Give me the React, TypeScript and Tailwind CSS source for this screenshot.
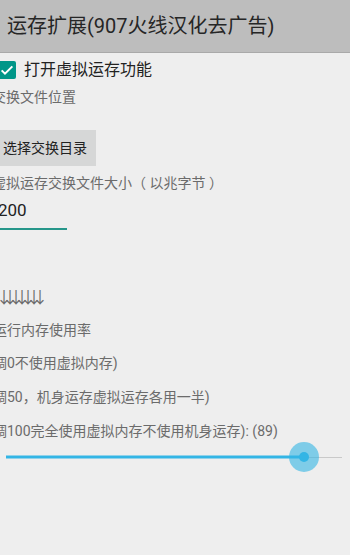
import React from 'react'

const font = { fontFamily: 'Roboto, "Noto Sans CJK SC", sans-serif' }

function Label({ children, className = '' }: { children: React.ReactNode; className?: string }) {
  return (
    <div className={`flex items-center text-[14px] text-[#6b6b6b] whitespace-nowrap ${className}`}>
      {children}
    </div>
  )
}

export default function App() {
  const value = 89
  return (
    <div className="w-[350px] h-[555px] overflow-hidden bg-[#eeeeee]" style={font}>
      <header className="h-[53px] bg-[#bdbdbd] border-b border-[#a9a9a9] flex items-center pl-[7px]">
        <span className="text-[20px] text-[#262626] whitespace-nowrap">运存扩展(907火线汉化去广告)</span>
      </header>

      <div className="flex flex-col">
        <div className="h-[32px] flex items-center mt-[1px]">
          <div className="ml-[-2px] w-[18px] h-[18px] rounded-[2px] bg-[#009688] flex items-center justify-center">
            <svg viewBox="0 0 24 24" className="w-[16px] h-[16px]" fill="none" stroke="#fff" strokeWidth="3">
              <path d="M4 12.5l5 5L20 6.5" />
            </svg>
          </div>
          <span className="ml-[8px] text-[16px] text-[#222] whitespace-nowrap">打开虚拟运存功能</span>
        </div>

        <Label className="h-[22px] ml-[-8px]">交换文件位置</Label>

        <div className="h-[22px]" />

        <div className="h-[36px] w-[96px] bg-[#d6d7d7] flex items-center pl-[3px] text-[14px] text-[#222] whitespace-nowrap">
          选择交换目录
        </div>

        <Label className="h-[34px] ml-[-8px]">虚拟运存交换文件大小（ 以兆字节 ）</Label>

        <div className="h-[21px] flex items-center text-[17px] text-[#222] ml-[-2px]">200</div>
        <div className="h-[7px]" />
        <div className="h-[2px] w-[67px] bg-[#26968a]" />

        <div className="h-[57px]" />
        <Label className="h-[22px] ml-[-4px] text-[16px] tracking-[-10px]">↓↓↓↓↓↓↓</Label>
        <div className="h-[10px]" />
        <Label className="h-[22px] ml-[-7px]">运行内存使用率</Label>
        <div className="h-[11px]" />
        <Label className="h-[22px] ml-[-7px]">调0不使用虚拟内存)</Label>
        <div className="h-[12px]" />
        <Label className="h-[22px] ml-[-7px]">调50，机身运存虚拟运存各用一半)</Label>
        <div className="h-[12px]" />
        <Label className="h-[22px] ml-[-7px]">调100完全使用虚拟内存不使用机身运存): ({value})</Label>

        <div className="h-[30px] relative mx-[6px] mr-[8px]">
          <div className="absolute left-0 right-0 top-1/2 h-px bg-[#c9c9c9]" />
          <div className="absolute left-0 top-1/2 -translate-y-1/2 h-[3px] bg-[#33b5e5]" style={{ width: `${value * 3.35}px` }} />
          <div
            className="absolute top-1/2 -translate-y-1/2 -translate-x-1/2 w-[30px] h-[30px] rounded-full bg-[#33b5e5]/60 flex items-center justify-center"
            style={{ left: `${value * 3.35}px` }}
          >
            <div className="w-[10px] h-[10px] rounded-full bg-[#33b5e5]" />
          </div>
        </div>
      </div>
    </div>
  )
}
